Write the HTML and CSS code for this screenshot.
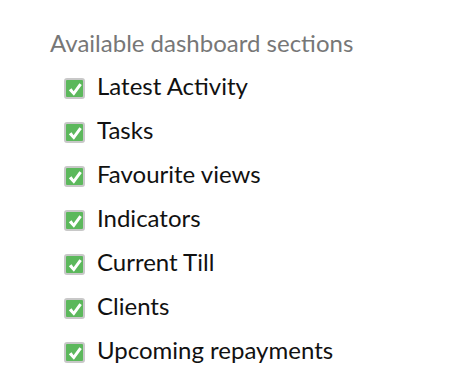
FILE: index.html
```html
<!DOCTYPE html>
<html>
<head>
<meta charset="utf-8">
<link rel="stylesheet" href="styles.css">
</head>
<body>
<div class="panel">
  <h3 class="title">Available dashboard sections</h3>
  <ul class="list">
    <li class="item"><span class="box"><svg viewBox="0 0 16 16" width="16" height="16"><path d="M1.8 9.2 L4.5 7.3 L6.6 10.3 L12.4 2.2 L14.8 4 L6.9 14.8 Z" fill="#fff"/></svg></span><span class="label">Latest Activity</span></li>
    <li class="item"><span class="box"><svg viewBox="0 0 16 16" width="16" height="16"><path d="M1.8 9.2 L4.5 7.3 L6.6 10.3 L12.4 2.2 L14.8 4 L6.9 14.8 Z" fill="#fff"/></svg></span><span class="label">Tasks</span></li>
    <li class="item"><span class="box"><svg viewBox="0 0 16 16" width="16" height="16"><path d="M1.8 9.2 L4.5 7.3 L6.6 10.3 L12.4 2.2 L14.8 4 L6.9 14.8 Z" fill="#fff"/></svg></span><span class="label">Favourite views</span></li>
    <li class="item"><span class="box"><svg viewBox="0 0 16 16" width="16" height="16"><path d="M1.8 9.2 L4.5 7.3 L6.6 10.3 L12.4 2.2 L14.8 4 L6.9 14.8 Z" fill="#fff"/></svg></span><span class="label">Indicators</span></li>
    <li class="item"><span class="box"><svg viewBox="0 0 16 16" width="16" height="16"><path d="M1.8 9.2 L4.5 7.3 L6.6 10.3 L12.4 2.2 L14.8 4 L6.9 14.8 Z" fill="#fff"/></svg></span><span class="label">Current Till</span></li>
    <li class="item"><span class="box"><svg viewBox="0 0 16 16" width="16" height="16"><path d="M1.8 9.2 L4.5 7.3 L6.6 10.3 L12.4 2.2 L14.8 4 L6.9 14.8 Z" fill="#fff"/></svg></span><span class="label">Clients</span></li>
    <li class="item"><span class="box"><svg viewBox="0 0 16 16" width="16" height="16"><path d="M1.8 9.2 L4.5 7.3 L6.6 10.3 L12.4 2.2 L14.8 4 L6.9 14.8 Z" fill="#fff"/></svg></span><span class="label">Upcoming repayments</span></li>
  </ul>
</div>
</body>
</html>
```
FILE: styles.css
```css
html, body {
  margin: 0;
  padding: 0;
  background: #fff;
}
body {
  font-family: Lato, "Open Sans", sans-serif;
}
.panel {
  padding: 29px 0 0 50px;
}
.title {
  margin: 0;
  font-size: 24px;
  font-weight: 400;
  color: #777;
  line-height: 28px;
}
.list {
  list-style: none;
  margin: 0;
  padding: 15px 0 0 14px;
  display: flex;
  flex-direction: column;
  gap: 16px;
}
.item {
  display: flex;
  align-items: flex-start;
  height: 28px;
  gap: 12px;
}
.box {
  box-sizing: border-box;
  width: 21px;
  height: 21px;
  margin-top: 6px;
  border: 2px solid #c8c8c8;
  border-radius: 3px;
  background: #5cb85c;
  display: flex;
  align-items: center;
  justify-content: center;
}
.label {
  font-size: 24px;
  color: #111;
  line-height: 28px;
}
```
